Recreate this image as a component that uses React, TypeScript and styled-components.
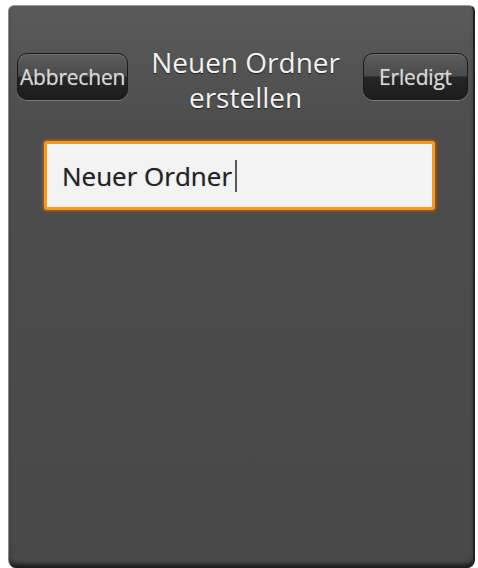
import React from "react";
import styled, { createGlobalStyle } from "styled-components";

const Global = createGlobalStyle`
  html, body { margin: 0; padding: 0; background: #ffffff; }
  body { width: 478px; height: 568px; overflow: hidden; font-family: "Open Sans", "DejaVu Sans", sans-serif; }
`;

const Screen = styled.div`
  margin: 5px 3px 0 8px;
  height: 563px;
  box-sizing: border-box;
  background: linear-gradient(#5a5a5a 0px, #4d4d4d 120px, #484848 100%);
  border-top: 1px solid #9a9a9a;
  border-left: 1px solid #8a8a8a;
  border-right: 2px solid #232323;
  border-radius: 6px 6px 8px 8px;
  box-shadow: inset 0 -6px 4px -2px #1c1c1c;
  display: flex;
  flex-direction: column;
`;

const Header = styled.div`
  display: flex;
  align-items: flex-start;
  padding: 39px 5px 0 8px;
`;

const Title = styled.h1`
  flex: 1;
  margin: 0;
  text-align: center;
  font-weight: 400;
  font-size: 28px;
  line-height: 35px;
  color: #f2f2f2;
  text-shadow: 0 1px 1px rgba(0, 0, 0, 0.6);
`;

const BarButton = styled.button`
  margin-top: 8px;
  height: 47px;
  min-width: 105px;
  padding: 0 2px;
  box-sizing: border-box;
  border: 1px solid #1a1a1a;
  border-radius: 10px;
  background: linear-gradient(#5c5c5c 0%, #4a4a4a 48%, #262626 52%, #1c1c1c 100%);
  box-shadow: 0 1px 0 rgba(255, 255, 255, 0.25), inset 0 1px 0 rgba(255, 255, 255, 0.12);
  color: #d6d6d6;
  font-family: "Open Sans", "DejaVu Sans", sans-serif;
  font-size: 21px;
  letter-spacing: -0.2px;
  text-shadow: 0 0 1px rgba(214, 214, 214, 0.6);
  display: flex;
  align-items: center;
  justify-content: center;
`;

const Field = styled.div`
  margin: 26px 38px 0 35px;
  height: 69px;
  box-sizing: border-box;
  border: 3px solid #f39a25;
  border-radius: 3px;
  box-shadow: 0 0 3px 1px #b8600e;
  background: #f3f3f3;
  display: flex;
  align-items: center;
  padding-left: 15px;
`;

const FieldText = styled.span`
  font-size: 26px;
  color: #222222;
  text-shadow: 0 0 1px rgba(34, 34, 34, 0.5);
`;

const Caret = styled.span`
  display: inline-block;
  width: 2px;
  height: 32px;
  margin-left: 3px;
  background: #5a5a5a;
`;

export default function App() {
  return (
    <>
      <Global />
      <Screen>
        <Header>
          <BarButton>Abbrechen</BarButton>
          <Title>
            Neuen Ordner
            <br />
            erstellen
          </Title>
          <BarButton>Erledigt</BarButton>
        </Header>
        <Field>
          <FieldText>Neuer Ordner</FieldText>
          <Caret />
        </Field>
      </Screen>
    </>
  );
}
